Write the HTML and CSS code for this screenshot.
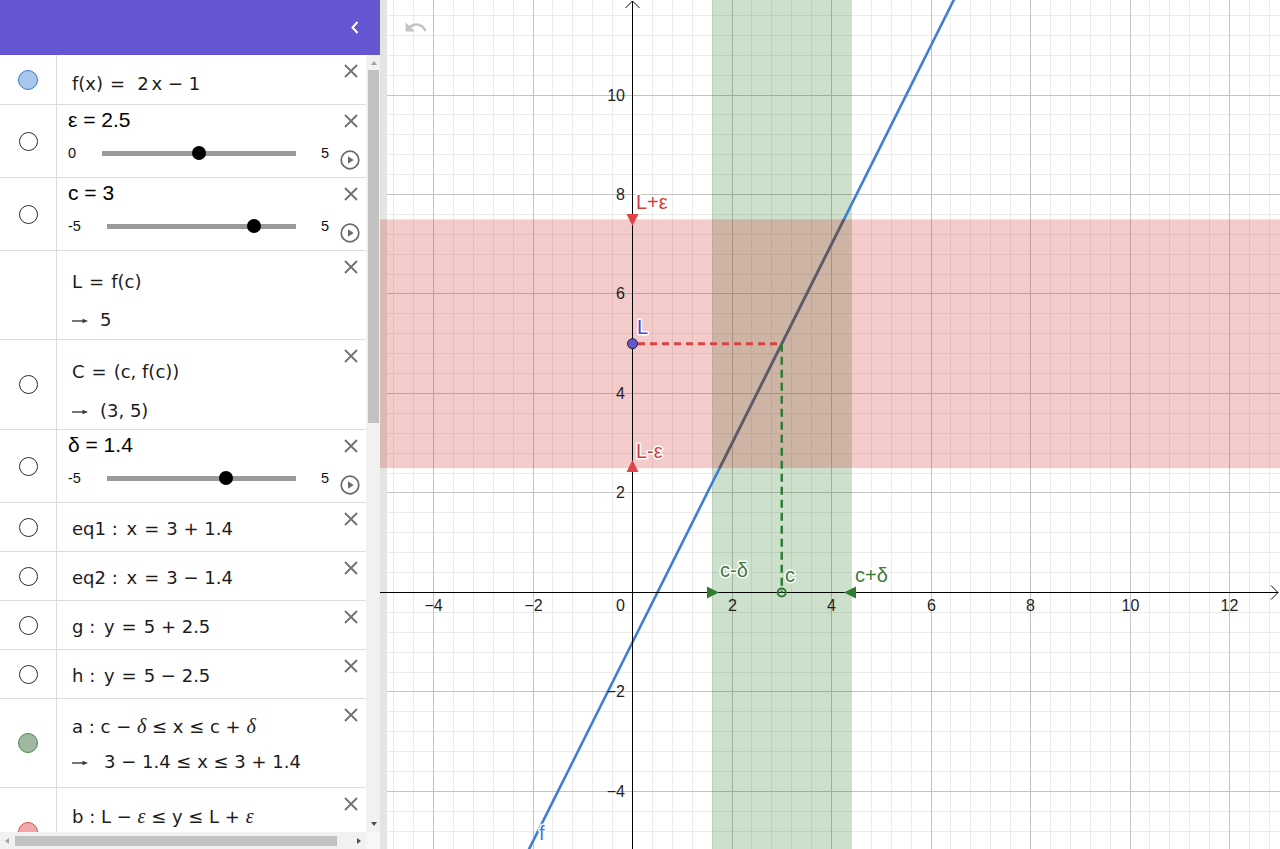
FILE: index.html
```html
<!DOCTYPE html>
<html>
<head>
<meta charset="utf-8">
<link rel="stylesheet" href="styles.css">
</head>
<body>
<div class="app">
  <aside class="panel">
    <header class="topbar">
      <svg class="collapse" width="8" height="13" viewBox="0 0 8 13"><polyline points="6.5,1 1.5,6.5 6.5,12"/></svg>
    </header>
    <div class="panel-body">
      <div class="list">

        <div class="item h50">
          <div class="marker"><span class="marble blue"></span></div>
          <div class="body">
            <div class="head"><div class="expr p17">f(x)<span class="rel">=</span><span class="gap"></span>2<span class="thin"></span>x <span class="bin">−</span> 1</div><svg class="close" viewBox="0 0 14 14"><path d="M1 1L13 13M13 1L1 13"/></svg></div>
          </div>
        </div>

        <div class="item h73">
          <div class="marker"><span class="ring"></span></div>
          <div class="body">
            <div class="head"><div class="title">ε = 2.5</div><svg class="close" viewBox="0 0 14 14"><path d="M1 1L13 13M13 1L1 13"/></svg></div>
            <div class="slider"><span class="smin">0</span><div class="track"><span class="knob" style="left:50%"></span></div><span class="smax">5</span><svg class="play" viewBox="0 0 20 20"><circle cx="10" cy="10" r="8.8"/><path d="M8 6.2L13.6 10L8 13.8Z"/></svg></div>
          </div>
        </div>

        <div class="item h73">
          <div class="marker"><span class="ring"></span></div>
          <div class="body">
            <div class="head"><div class="title">c = 3</div><svg class="close" viewBox="0 0 14 14"><path d="M1 1L13 13M13 1L1 13"/></svg></div>
            <div class="slider"><span class="smin">-5</span><div class="track"><span class="knob" style="left:78%"></span></div><span class="smax">5</span><svg class="play" viewBox="0 0 20 20"><circle cx="10" cy="10" r="8.8"/><path d="M8 6.2L13.6 10L8 13.8Z"/></svg></div>
          </div>
        </div>

        <div class="item h89">
          <div class="marker"></div>
          <div class="body">
            <div class="head"><div class="expr p19">L<span class="rel">=</span>f(c)</div><svg class="close" viewBox="0 0 14 14"><path d="M1 1L13 13M13 1L1 13"/></svg></div>
            <div class="res m14"><svg class="arrow" viewBox="0 0 16 8"><path d="M0 4H12"/><path class="hd" d="M10.5 1.8L16 4L10.5 6.2Z"/></svg>5</div>
          </div>
        </div>

        <div class="item h90">
          <div class="marker"><span class="ring"></span></div>
          <div class="body">
            <div class="head"><div class="expr p20">C<span class="rel">=</span>(c, f(c))</div><svg class="close" viewBox="0 0 14 14"><path d="M1 1L13 13M13 1L1 13"/></svg></div>
            <div class="res m15"><svg class="arrow" viewBox="0 0 16 8"><path d="M0 4H12"/><path class="hd" d="M10.5 1.8L16 4L10.5 6.2Z"/></svg>(3, 5)</div>
          </div>
        </div>

        <div class="item h73">
          <div class="marker"><span class="ring"></span></div>
          <div class="body">
            <div class="head"><div class="title">δ = 1.4</div><svg class="close" viewBox="0 0 14 14"><path d="M1 1L13 13M13 1L1 13"/></svg></div>
            <div class="slider"><span class="smin">-5</span><div class="track"><span class="knob" style="left:63%"></span></div><span class="smax">5</span><svg class="play" viewBox="0 0 20 20"><circle cx="10" cy="10" r="8.8"/><path d="M8 6.2L13.6 10L8 13.8Z"/></svg></div>
          </div>
        </div>

        <div class="item h49">
          <div class="marker"><span class="ring"></span></div>
          <div class="body">
            <div class="head"><div class="expr p14">eq1 : <span class="thin"></span>x<span class="rel">=</span>3 <span class="bin">+</span> 1.4</div><svg class="close" viewBox="0 0 14 14"><path d="M1 1L13 13M13 1L1 13"/></svg></div>
          </div>
        </div>

        <div class="item h49">
          <div class="marker"><span class="ring"></span></div>
          <div class="body">
            <div class="head"><div class="expr p14">eq2 : <span class="thin"></span>x<span class="rel">=</span>3 <span class="bin">−</span> 1.4</div><svg class="close" viewBox="0 0 14 14"><path d="M1 1L13 13M13 1L1 13"/></svg></div>
          </div>
        </div>

        <div class="item h49">
          <div class="marker"><span class="ring"></span></div>
          <div class="body">
            <div class="head"><div class="expr p14">g : <span class="thin"></span>y<span class="rel">=</span>5 <span class="bin">+</span> 2.5</div><svg class="close" viewBox="0 0 14 14"><path d="M1 1L13 13M13 1L1 13"/></svg></div>
          </div>
        </div>

        <div class="item h49">
          <div class="marker"><span class="ring"></span></div>
          <div class="body">
            <div class="head"><div class="expr p14">h : <span class="thin"></span>y<span class="rel">=</span>5 <span class="bin">−</span> 2.5</div><svg class="close" viewBox="0 0 14 14"><path d="M1 1L13 13M13 1L1 13"/></svg></div>
          </div>
        </div>

        <div class="item h89">
          <div class="marker"><span class="marble green"></span></div>
          <div class="body">
            <div class="head"><div class="expr p15">a : c <span class="bin">−</span> <i class="gr">δ</i> ≤ x ≤ c <span class="bin">+</span> <i class="gr">δ</i></div><svg class="close" viewBox="0 0 14 14"><path d="M1 1L13 13M13 1L1 13"/></svg></div>
            <div class="res m11"><svg class="arrow low" viewBox="0 0 16 8"><path d="M0 4H12"/><path class="hd" d="M10.5 1.8L16 4L10.5 6.2Z"/></svg><span class="wide">3 <span class="bin">−</span> 1.4 ≤ x ≤ 3 <span class="bin">+</span> 1.4</span></div>
          </div>
        </div>

        <div class="item h89">
          <div class="marker"><span class="marble red"></span></div>
          <div class="body">
            <div class="head"><div class="expr p16">b : L <span class="bin">−</span> <i class="gr">ε</i> ≤ y ≤ L <span class="bin">+</span> <i class="gr">ε</i></div><svg class="close" viewBox="0 0 14 14"><path d="M1 1L13 13M13 1L1 13"/></svg></div>
          </div>
        </div>

      </div>
      <div class="vscroll">
        <span class="tri-up"></span>
        <span class="vthumb"></span>
        <span class="tri-down"></span>
      </div>
      <div class="hscroll">
        <span class="tri-left"></span>
        <span class="hthumb"></span>
        <span class="tri-right"></span>
      </div>
      <div class="corner"></div>
    </div>
  </aside>

  <main class="graphics">
    <svg class="plot" width="900" height="849" viewBox="380 0 900 849">
      <rect x="380" y="0" width="900" height="849" fill="#fff"/>
      <path class="minor" d="M393.5 0V849M413.5 0V849M453.5 0V849M473.5 0V849M493.5 0V849M513.5 0V849M552.5 0V849M572.5 0V849M592.5 0V849M612.5 0V849M652.5 0V849M672.5 0V849M692.5 0V849M712.5 0V849M751.5 0V849M771.5 0V849M791.5 0V849M811.5 0V849M851.5 0V849M871.5 0V849M891.5 0V849M911.5 0V849M950.5 0V849M970.5 0V849M990.5 0V849M1010.5 0V849M1050.5 0V849M1070.5 0V849M1090.5 0V849M1110.5 0V849M1149.5 0V849M1169.5 0V849M1189.5 0V849M1209.5 0V849M1249.5 0V849M1269.5 0V849
      M380 15.5H1280M380 35.5H1280M380 55.5H1280M380 75.5H1280M380 114.5H1280M380 134.5H1280M380 154.5H1280M380 174.5H1280M380 214.5H1280M380 234.5H1280M380 254.5H1280M380 274.5H1280M380 313.5H1280M380 333.5H1280M380 353.5H1280M380 373.5H1280M380 413.5H1280M380 433.5H1280M380 453.5H1280M380 473.5H1280M380 512.5H1280M380 532.5H1280M380 552.5H1280M380 572.5H1280M380 612.5H1280M380 632.5H1280M380 652.5H1280M380 672.5H1280M380 711.5H1280M380 731.5H1280M380 751.5H1280M380 771.5H1280M380 811.5H1280M380 831.5H1280"/>
      <path class="major" d="M433.5 0V849M533.5 0V849M732.5 0V849M831.5 0V849M931.5 0V849M1030.5 0V849M1130.5 0V849M1229.5 0V849
      M380 95.5H1280M380 194.5H1280M380 293.5H1280M380 393.5H1280M380 492.5H1280M380 691.5H1280M380 791.5H1280"/>
      <rect x="380" y="0" width="7" height="849" fill="#dfe7de"/>
      <rect x="712" y="0" width="139.5" height="849" fill="rgb(0,100,0)" fill-opacity="0.2"/>
      <path d="M956 -4.5L528 851.2" stroke="#3f7fd3" stroke-width="2.6" fill="none"/>
      <rect x="380" y="219.4" width="900" height="248.7" fill="rgb(211,47,47)" fill-opacity="0.25"/>
      <path d="M843.9 219.4L719.6 468.1" stroke="#5a5c66" stroke-width="2.6" fill="none"/>
      <path class="axis" d="M632.5 1V849M380 592.5H1278"/>
      <path class="arrowhead" d="M625.5 8L632.5 1L639.5 8M1271 585.5L1278 592.5L1271 599.5"/>
      <path d="M638 343.75H781.75" stroke="#d84444" stroke-width="2.8" stroke-dasharray="7 5" fill="none"/>
      <path d="M781.75 343.75V592.5" stroke="#2f7d33" stroke-width="2.5" stroke-dasharray="8 5" fill="none"/>
      <polygon points="626.5,214 638.5,214 632.5,226" fill="#e04444"/>
      <polygon points="632.5,460 626.5,472 638.5,472" fill="#e04444"/>
      <polygon points="707,586.5 719,592.5 707,598.5" fill="#2f7d33"/>
      <polygon points="856,586.5 844,592.5 856,598.5" fill="#2f7d33"/>
      <circle cx="781.75" cy="592.5" r="4" fill="none" stroke="#2f7d33" stroke-width="2"/>
      <circle cx="632.5" cy="343.75" r="5" fill="#6557d2" stroke="#1e1e1e" stroke-width="1"/>
      <g class="lbl">
        <text x="636" y="209" fill="#d63c3c">L+ε</text>
        <text x="636" y="458" fill="#d63c3c">L-ε</text>
        <text x="637" y="334" fill="#4848d0">L</text>
        <text x="720" y="577" fill="#3b7b3b">c-δ</text>
        <text x="785" y="582" fill="#3b7b3b">c</text>
        <text x="855" y="582" fill="#3b7b3b">c+δ</text>
        <text x="539" y="840" fill="#3f7fd3">f</text>
      </g>
      <g class="ticks xt">
        <text x="433.5" y="611">−4</text>
        <text x="533.5" y="611">−2</text>
        <text x="732.5" y="611">2</text>
        <text x="831.5" y="611">4</text>
        <text x="931.5" y="611">6</text>
        <text x="1030.5" y="611">8</text>
        <text x="1130.5" y="611">10</text>
        <text x="1229.5" y="611">12</text>
      </g>
      <g class="ticks yt">
        <text x="625" y="611">0</text>
        <text x="625" y="101">10</text>
        <text x="625" y="200">8</text>
        <text x="625" y="299">6</text>
        <text x="625" y="399">4</text>
        <text x="625" y="498">2</text>
        <text x="625" y="697">−2</text>
        <text x="625" y="797">−4</text>
      </g>
      <path transform="translate(403.5 15) scale(1.03)" fill="#c4c4c4" d="M12.5 8c-2.65 0-5.050.99-6.9 2.6L2 7v9h9l-3.62-3.62c1.39-1.16 3.160-1.88 5.120-1.88 3.54 0 6.550 2.31 7.6 5.5l2.37-.78C21.08 11.030 17.150 8 12.5 8z"/>
    </svg>
  </main>
</div>
</body>
</html>
```

FILE: styles.css
```css
* { box-sizing: border-box; margin: 0; padding: 0; }
html, body { width: 1280px; height: 849px; overflow: hidden; background: #fff; }
body { font-family: "Liberation Sans", Arial, sans-serif; color: #000; }

.app { display: flex; width: 1280px; height: 849px; }

/* ---------- algebra panel ---------- */
.panel { width: 380px; flex: none; display: flex; flex-direction: column; background: #fff; }
.topbar { height: 55px; flex: none; background: #6557d2; display: flex; justify-content: flex-end; align-items: center; padding-right: 21px; }
.collapse polyline { fill: none; stroke: #fff; stroke-width: 2; }

.panel-body { flex: 1; min-height: 0; display: grid; grid-template-columns: 366px 14px; grid-template-rows: 1fr 17px; }
.list { overflow: hidden; min-height: 0; }

.item { display: flex; border-bottom: 1px solid #dcdcdc; }
.h49 { height: 49px; }
.h50 { height: 50px; }
.h73 { height: 73px; }
.h89 { height: 89px; }
.h90 { height: 90px; }

.marker { width: 57px; flex: none; border-right: 1px solid #dcdcdc; display: flex; align-items: center; justify-content: center; }
.ring { width: 19px; height: 19px; border: 1px solid #2b2b2b; border-radius: 50%; background: #fff; }
.marble { width: 20px; height: 20px; border-radius: 50%; border: 1px solid; }
.marble.blue { background: #a8c6ec; border-color: #3f7dd0; }
.marble.green { background: #a2b7a2; border-color: #4a8a4a; }
.marble.red { background: #f1a7a7; border-color: #d44f4f; }

.body { flex: 1; min-width: 0; padding-left: 15px; }
.head { display: flex; justify-content: space-between; align-items: flex-start; }
.close { width: 14px; height: 14px; flex: none; margin: 9px 8px 0 0; }
.close path { stroke: #707070; stroke-width: 1.8; fill: none; }

.expr, .res { font-family: "DejaVu Sans", sans-serif; font-size: 18px; line-height: 24px; color: #1c1c1c; white-space: nowrap; }
.p14 { padding-top: 14px; }
.p15 { padding-top: 15px; }
.p16 { padding-top: 16px; }
.p17 { padding-top: 17px; }
.p19 { padding-top: 19px; }
.p20 { padding-top: 20px; }
.m11 { margin-top: 11px; }
.m14 { margin-top: 14px; }
.m15 { margin-top: 15px; }

.rel { margin: 0 7px; }
.gap { display: inline-block; width: 5px; }
.thin { display: inline-block; width: 3px; }
.bin { margin: 0; }
.gr { font-family: "Liberation Serif", serif; font-style: italic; font-size: 20px; }

.arrow { width: 16px; height: 8px; vertical-align: middle; margin-right: 12px; }
.arrow.low { vertical-align: 1px; margin-right: 16px; }
.arrow path { stroke: #3a3a3a; stroke-width: 1.4; fill: none; }
.arrow path.hd { fill: #3a3a3a; stroke: none; }

.title { font-size: 21px; line-height: 24px; padding-top: 3px; margin-left: -4px; color: #000; }

.slider { display: flex; align-items: center; height: 20px; margin-top: 11px; margin-left: -4px; padding-right: 6px; font-size: 14.5px; color: #111; }
.smin { margin-right: 26px; }
.track { flex: 1; min-width: 0; height: 5px; background: #9a9a9a; position: relative; }
.knob { position: absolute; top: 50%; width: 14px; height: 14px; margin: -7px 0 0 -7px; background: #000; border-radius: 50%; }
.smax { margin-left: 25px; }
.play { width: 20px; height: 20px; flex: none; margin-left: 11px; margin-top: 13px; }
.play circle { fill: none; stroke: #6a6a6a; stroke-width: 1.7; }
.play path { fill: #6a6a6a; }

/* scrollbars */
.vscroll { background: #f1f1f1; display: flex; flex-direction: column; align-items: center; padding: 6px 0 6px 1px; }
.tri-up { width: 0; height: 0; border-left: 3.5px solid transparent; border-right: 3.5px solid transparent; border-bottom: 4px solid #a3a3a3; }
.vthumb { width: 11px; height: 353px; margin-top: 5px; background: #c1c1c1; }
.tri-down { width: 0; height: 0; margin-top: auto; border-left: 3.5px solid transparent; border-right: 3.5px solid transparent; border-top: 4px solid #505050; }
.hscroll { background: #f1f1f1; display: flex; align-items: center; padding: 0 5px; }
.tri-left { width: 0; height: 0; border-top: 3.5px solid transparent; border-bottom: 3.5px solid transparent; border-right: 4px solid #a3a3a3; }
.hthumb { width: 322px; height: 10px; margin-left: 6px; background: #c1c1c1; }
.tri-right { width: 0; height: 0; margin-left: auto; border-top: 3.5px solid transparent; border-bottom: 3.5px solid transparent; border-left: 4px solid #505050; }
.corner { background: #f7f7f7; }

/* ---------- graphics view ---------- */
.graphics { flex: 1; height: 849px; overflow: hidden; }
.plot { display: block; }
.minor { stroke: #ebebeb; stroke-width: 1; fill: none; shape-rendering: crispEdges; }
.major { stroke: #c3c3c3; stroke-width: 1; fill: none; shape-rendering: crispEdges; }
.axis { stroke: #000; stroke-width: 1; fill: none; shape-rendering: crispEdges; }
.arrowhead { stroke: #000; stroke-width: 1; fill: none; }
.lbl text { font-family: "Liberation Sans", Arial, sans-serif; font-size: 20px; stroke: #fff; stroke-width: 3px; stroke-linejoin: round; paint-order: stroke; }
.ticks text { font-family: "Liberation Sans", Arial, sans-serif; font-size: 16px; fill: #1e1e1e; }
.xt text { text-anchor: middle; }
.yt text { text-anchor: end; }
```
